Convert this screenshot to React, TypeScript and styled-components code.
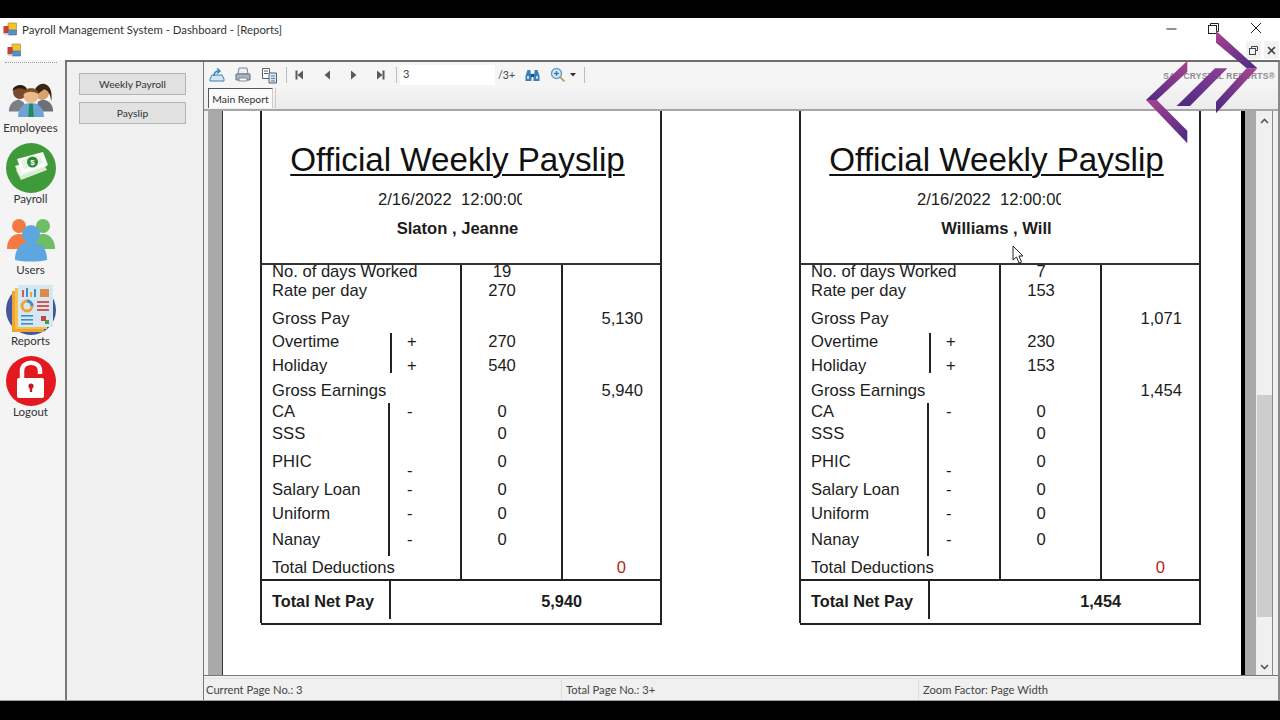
import React from "react"
import styled, { createGlobalStyle } from "styled-components"

const Global = createGlobalStyle`
  html, body {
    margin: 0;
    padding: 0;
    background: #000;
    overflow: hidden;
  }
  * {
    box-sizing: border-box;
  }
`

const Screen = styled.div`
  width: 1280px;
  height: 720px;
  padding: 18px 0 19px;
  background: #000;
  position: relative;
  overflow: hidden;
  font-family: "Lato", "Noto Sans", sans-serif;
  color: #222;
`
const Win = styled.div`
  height: 683px;
  background: #fff;
  display: flex;
  flex-direction: column;
`
const TitleBar = styled.div`
  height: 22px;
  display: flex;
  align-items: center;
  padding-left: 3px;
  font-size: 11.35px;
  color: #333;
  gap: 5px;
`
const WinControls = styled.div`
  margin-left: auto;
  display: flex;
  align-items: center;
  padding: 0 18px 2px 0;
  gap: 31px;
`
const MenuBar = styled.div`
  height: 20px;
  display: flex;
  align-items: center;
  padding-left: 7px;
`
const MdiControls = styled.div`
  margin-left: auto;
  display: flex;
  height: 18px;
  gap: 3px;
  padding-right: 1px;
`
const MdiButton = styled.div`
  width: 15px;
  height: 18px;
  background: #f2f2f2;
  display: flex;
  align-items: center;
  justify-content: center;
`
const Body = styled.div`
  flex: 1;
  display: flex;
  min-height: 0;
  background: #f0f0f0;
  border-top: 2px solid #6e6e6e;
  border-right: 2px solid #8a8a8a;
  border-bottom: 1px solid #a0a0a0;
`
const Sidebar = styled.div`
  width: 65px;
  margin-top: -2px;
  background: #f4f4f4;
  border-top: 2px solid #f4f4f4;
  display: flex;
  flex-direction: column;
  align-items: center;
  padding-right: 4px;
`
const Grip = styled.div`
  width: 52px;
  height: 1px;
  border-top: 1px dotted #9a9a9a;
  margin-bottom: 10px;
`
const NavItem = styled.div`
  width: 60px;
  height: 71px;
  display: flex;
  flex-direction: column;
  align-items: center;
  font-size: 11.5px;
  line-height: 14px;
  color: #333;
  white-space: nowrap;
`
const FirstNavItem = styled(NavItem)`
  height: 68px;
  margin-top: 2px;
`
const IconSlot = styled.div`
  height: 49px;
  flex: none;
  display: flex;
  align-items: center;
  justify-content: center;
`
const FirstIconSlot = styled(IconSlot)`
  height: 46px;
`
const SubNav = styled.div`
  width: 139px;
  border-left: 2px solid #777;
  border-right: 1px solid #777;
  padding: 11px 17px 0 12px;
  display: flex;
  flex-direction: column;
  gap: 7px;
  background: #f0f0f0;
`
const SubButton = styled.div`
  height: 22px;
  background: #e1e1e1;
  border: 1px solid #b4b4b4;
  padding-bottom: 1px;
  font-size: 10.3px;
  color: #333;
  display: flex;
  align-items: center;
  justify-content: center;
`
const Viewer = styled.div`
  flex: 1;
  min-width: 0;
  display: flex;
  flex-direction: column;
  background: #f0f0f0;
`
const Toolbar = styled.div`
  height: 26px;
  flex: none;
  display: flex;
  align-items: center;
  background: #f5f5f5;
  font-size: 10.6px;
  color: #444;
`
const ToolIcon = styled.div<{ $w: number }>`
  width: ${(p) => p.$w}px;
  flex: none;
  display: flex;
  align-items: center;
  justify-content: center;
`
const ToolSep = styled.div<{ $gap: number }>`
  width: 1px;
  height: 16px;
  margin-left: ${(p) => p.$gap}px;
  background: #bdbdbd;
  flex: none;
`
const PageInput = styled.div`
  width: 95px;
  height: 20px;
  margin-left: 3px;
  background: #fff;
  padding: 0 0 3px 3px;
  font-size: 11px;
  display: flex;
  align-items: center;
  flex: none;
`
const PageTotal = styled.span`
  width: 24px;
  padding-left: 3px;
  flex: none;
`
const Brand = styled.div`
  margin-left: auto;
  padding: 2px 3px 0 0;
  font-family: "Liberation Sans", sans-serif;
  font-size: 8.4px;
  font-weight: 700;
  color: #8c8c8c;
  letter-spacing: 0.25px;
  white-space: nowrap;
`
const TabRow = styled.div`
  height: 23px;
  flex: none;
  display: flex;
  align-items: flex-start;
  padding-left: 4px;
  background: linear-gradient(#f3f3f3, #ececec);
  border-bottom: 2px solid #a6a6a6;
`
const Tab = styled.div`
  width: 65px;
  height: 20px;
  background: #fafafa;
  border-top: 1px solid #555;
  border-left: 1px solid #555;
  border-right: 1px solid #ccc;
  font-size: 10.4px;
  color: #333;
  display: flex;
  align-items: center;
  justify-content: center;
`
const TabEdge = styled.div`
  width: 1px;
  height: 20px;
  margin-left: 2px;
  background: #c9c9c9;
`
const ReportFrame = styled.div`
  flex: 1;
  min-height: 0;
  display: flex;
  padding: 0 5px 0 4px;
  background: #f0f0f0;
  border-bottom: 1px solid #777;
  margin-bottom: 2px;
`
const Sheet = styled.div`
  flex: 1;
  min-width: 0;
  display: flex;
  background: #fff;
  overflow: hidden;
  position: relative;
`
const LeftStrip = styled.div`
  width: 15px;
  flex: none;
  background: #a9a9a9;
  border-right: 1px solid #333;
`
const SlipArea = styled.div`
  flex: 1;
  min-width: 0;
  display: flex;
  gap: 137px;
  padding-left: 37px;
  background: #fff;
`
const RightStrip = styled.div`
  width: 16px;
  flex: none;
  background: #a9a9a9;
  border-left: 4px solid #000;
  border-right: 1px solid #eee;
`
const Scrollbar = styled.div`
  width: 16px;
  flex: none;
  background: #f0f0f0;
  border-right: 1px solid #888;
  display: flex;
  flex-direction: column;
  align-items: center;
  position: relative;
`
const ScrollArrow = styled.div`
  height: 17px;
  width: 100%;
  flex: none;
  display: flex;
  align-items: center;
  justify-content: center;
`
const ScrollUp = styled(ScrollArrow)`
  padding-top: 3px;
`
const ScrollTrack = styled.div`
  flex: 1;
  width: 100%;
  padding-top: 267px;
  padding-bottom: 41px;
  display: flex;
`
const ScrollThumb = styled.div`
  flex: 1;
  background: #cdcdcd;
`
const StatusBar = styled.div`
  height: 22px;
  flex: none;
  display: grid;
  grid-template-columns: 357px 357px 1fr;
  align-items: center;
  font-size: 11.2px;
  color: #444;
  border-top: 1px solid #e2e2e2;
`
const StatusCell = styled.div<{ $pad: number }>`
  height: 100%;
  display: flex;
  align-items: center;
  padding-left: ${(p) => p.$pad}px;
  & + & {
    border-left: 1px solid #dcdcdc;
  }
`
const Slip = styled.div`
  width: 402px;
  flex: none;
  font-family: "Liberation Sans", Arial, sans-serif;
  color: #1c1c1c;
`
const SlipHead = styled.div`
  height: 154px;
  border-left: 2px solid #222;
  border-right: 2px solid #222;
  border-bottom: 2px solid #333;
  display: flex;
  flex-direction: column;
  align-items: center;
  padding-right: 7px;
`
const SlipTitle = styled.div`
  margin-top: 29px;
  font-size: 33.2px;
  line-height: 40px;
  text-decoration: underline;
  text-decoration-thickness: 2px;
  text-underline-offset: 3px;
  color: #111;
  white-space: nowrap;
`
const SlipDate = styled.div`
  margin-top: 10px;
  margin-right: 15px;
  width: 144px;
  overflow: hidden;
  white-space: nowrap;
  font-size: 16.6px;
  line-height: 20px;
`
const SlipName = styled.div`
  margin-top: 9px;
  font-size: 16.6px;
  line-height: 20px;
  font-weight: 700;
`
const Rows = styled.div`
  border-left: 2px solid #222;
  border-right: 2px solid #222;
  overflow: hidden;
`
const Row = styled.div<{ $h: number; $up?: number }>`
  height: ${(p) => p.$h}px;
  display: grid;
  grid-template-columns: 128px 70px 101px 1fr;
  font-size: 16.6px;
  line-height: 20px;
  & > div {
    margin-top: ${(p) => -(p.$up ?? 0)}px;
    padding-top: 1px;
  }
`
const Label = styled.div`
  padding-left: 10px;
  white-space: nowrap;
`
const Sign = styled.div<{ $top?: number; $bottom?: number; $rule?: boolean; $x?: number }>`
  position: relative;
  padding-left: 17px;
  &::before {
    content: "";
    display: ${(p) => (p.$rule ? "block" : "none")};
    position: absolute;
    left: ${(p) => p.$x ?? 0}px;
    top: ${(p) => p.$top ?? 0}px;
    bottom: ${(p) => p.$bottom ?? -4}px;
    width: 2px;
    background: #222;
  }
`
const PhicDash = styled.span`
  display: block;
  margin-top: 9px;
`
const Amount = styled.div`
  border-left: 2px solid #222;
  padding-right: 19px;
  text-align: center;
  height: calc(100% + 8px);
`
const Total = styled.div<{ $red?: boolean }>`
  border-left: 2px solid #222;
  text-align: right;
  padding-right: ${(p) => (p.$red ? 34 : 17)}px;
  color: ${(p) => (p.$red ? "#b3261e" : "inherit")};
  height: calc(100% + 8px);
`
const NetLine = styled.div`
  height: 2px;
  background: #222;
`
const NetPay = styled.div`
  height: 42px;
  display: grid;
  grid-template-columns: 129px 1fr;
  font-size: 16.3px;
  font-weight: 700;
  border-left: 2px solid #222;
  border-right: 2px solid #222;
`
const NetLabel = styled.div`
  height: 38px;
  padding: 10px 0 0 10px;
  border-right: 2px solid #222;
  line-height: 20px;
`
const NetValue = styled.div`
  padding: 10px 78px 0 0;
  text-align: right;
  line-height: 20px;
`
const NetBottom = styled.div`
  height: 2px;
  background: #222;
  margin-left: 1px;
`
const Overlay = styled.svg`
  position: absolute;
  pointer-events: none;
`
const CursorMark = styled(Overlay)`
  left: 1012px;
  top: 245px;
`
const LogoMark = styled(Overlay)`
  right: 0;
  top: 0;
`

function AppGlyph() {
  return (
    <svg width="14" height="14" viewBox="0 0 14 14">
      <rect x="5" y="1" width="8.5" height="7.5" fill="#f2c230" stroke="#a8852a" strokeWidth="0.6" />
      <rect x="0.5" y="4" width="5" height="7.5" fill="#c8402f" />
      <rect x="5" y="8" width="8.5" height="5" fill="#5b8ec8" stroke="#3b6aa0" strokeWidth="0.6" />
      <rect x="1.5" y="11" width="4" height="2" fill="#d0d0d0" />
    </svg>
  )
}

function EmployeesIcon() {
  return (
    <svg width="48" height="39" viewBox="0 0 52 42">
      <path d="M2 35c0-8 5-12 11-13l5 3 4 10z" fill="#7d7f86" />
      <path d="M30 35l4-11 5-2c6 1 11 5 11 13z" fill="#6d7078" />
      <circle cx="14" cy="14" r="7.5" fill="#7b4a2c" />
      <path d="M6 13c0-8 16-9 16 0-4-4-12-4-16 0z" fill="#2b1a12" />
      <circle cx="38" cy="15" r="7.5" fill="#d9a070" />
      <path d="M29 24c-2-14 5-19 10-19s11 5 9 19c-1-7-3-12-8-13-4 4-9 4-9 13z" fill="#3a2416" />
      <path d="M12 41c0-10 6-15 14-15s14 5 14 15z" fill="#6ea3d6" />
      <path d="M24 27h4l1 14h-6z" fill="#1f8a5e" />
      <circle cx="26" cy="18" r="8" fill="#eeba8a" />
      <path d="M18 16c0-8 16-8 16 0-5-3-11-3-16 0z" fill="#7a5128" />
    </svg>
  )
}

function PayrollIcon() {
  return (
    <svg width="50" height="50" viewBox="0 0 50 50">
      <circle cx="25" cy="25" r="25" fill="#3f9a3a" />
      <path d="M10 27l26-9 5 9-26 10z" fill="#d8ecd2" />
      <path d="M9 23l27-9 5 9-27 10z" fill="#eef7ea" />
      <path d="M11 16l26-7 5 13-26 8z" fill="#fff" />
      <path d="M14.5 17.5l20-5.5 3.5 8.5-20 6z" fill="#e6f3e2" />
      <circle cx="26.5" cy="19" r="5.5" fill="#2e8a34" />
      <text x="26.5" y="22" fontSize="8" fontWeight="700" textAnchor="middle" fill="#fff" fontFamily="Liberation Sans">$</text>
    </svg>
  )
}

function UsersIcon() {
  return (
    <svg width="48" height="48" viewBox="0 0 48 48">
      <circle cx="12" cy="11" r="7" fill="#f47a44" />
      <path d="M0 34c0-9 5-15 12-15s9 4 9 15z" fill="#f47a44" />
      <circle cx="36" cy="11" r="7" fill="#6cbf65" />
      <path d="M48 34c0-9-5-15-12-15s-9 4-9 15z" fill="#6cbf65" />
      <circle cx="24" cy="19" r="9" fill="#5ea6e0" />
      <path d="M8 45c0-12 6-18 16-18s16 6 16 18c-10 2-22 2-32 0z" fill="#5ea6e0" />
    </svg>
  )
}

function ReportsIcon() {
  return (
    <svg width="50" height="50" viewBox="0 0 50 50">
      <circle cx="25" cy="25" r="25" fill="#43569a" />
      <rect x="6" y="6" width="32" height="41" fill="#eda52f" />
      <rect x="9" y="3" width="32" height="41" fill="#f6c04c" />
      <rect x="12" y="0" width="35" height="42" fill="#d3e8f2" />
      <rect x="16" y="5" width="2" height="7" fill="#e2574c" />
      <rect x="20" y="3" width="2" height="9" fill="#3f8fcf" />
      <rect x="24" y="7" width="2" height="5" fill="#eda52f" />
      <rect x="28" y="4" width="2" height="8" fill="#3f8fcf" />
      <rect x="34" y="4" width="9" height="8" fill="#d98b4a" />
      <circle cx="21" cy="21" r="5" fill="none" stroke="#eda52f" strokeWidth="3" />
      <path d="M21 16a5 5 0 0 1 5 5" fill="none" stroke="#3f8fcf" strokeWidth="3" />
      <rect x="31" y="16" width="12" height="2" fill="#d9534f" />
      <rect x="31" y="20" width="12" height="2" fill="#d9534f" />
      <rect x="31" y="24" width="12" height="2" fill="#d9534f" />
      <rect x="15" y="30" width="12" height="1.6" fill="#3f8fcf" />
      <rect x="15" y="34" width="12" height="1.6" fill="#3f8fcf" />
      <rect x="15" y="38" width="12" height="1.6" fill="#3f8fcf" />
      <rect x="35" y="31" width="5" height="5" fill="#c9433b" />
      <rect x="39" y="35" width="4" height="4" fill="#4a9a49" />
    </svg>
  )
}

function LogoutIcon() {
  return (
    <svg width="50" height="50" viewBox="0 0 50 50">
      <circle cx="25" cy="25" r="25" fill="#e4181f" />
      <path d="M16 22v-7c0-11 18-11 18 0v3" fill="none" stroke="#fff" strokeWidth="4.5" />
      <rect x="11" y="22" width="27" height="20" rx="2" fill="#fff" />
      <circle cx="25" cy="30" r="2.6" fill="#c41a1f" />
      <rect x="23.8" y="30" width="2.4" height="6" fill="#c41a1f" />
    </svg>
  )
}

function ExportIcon() {
  return (
    <svg width="16" height="16" viewBox="0 0 16 16" fill="none">
      <path d="M1 12l2-4h10l2 4v2H1z" fill="#d3e6f5" stroke="#3f7fb0" />
      <path d="M5 9c0-3 2-5 5-5M8 1.5L11 4 8 6.5" stroke="#3a86bd" strokeWidth="1.5" />
    </svg>
  )
}

function PrintIcon() {
  return (
    <svg width="16" height="16" viewBox="0 0 16 16">
      <path d="M4 1h8l1 6H3z" fill="#eef1f5" stroke="#7d8894" />
      <path d="M1 7h14v6H1z" fill="#a9b5c2" stroke="#64707c" />
      <path d="M4 11h8v3H4z" fill="#fff" stroke="#7d8894" />
    </svg>
  )
}

function CopyIcon() {
  return (
    <svg width="17" height="17" viewBox="0 0 17 17">
      <path d="M1.5 1.5h7v10h-7z" fill="#fff" stroke="#56616c" />
      <path d="M3 4h4M3 6.5h4" stroke="#56616c" />
      <path d="M8 6h7.5v10H8z" fill="#dfe8f1" stroke="#56616c" />
      <path d="M10 9h4M10 11.500h4M10 14h4" stroke="#4a7da8" />
    </svg>
  )
}

function PageArrow({ kind }: { kind: "first" | "prev" | "next" | "last" }) {
  const left = kind === "first" || kind === "prev"
  const bar = kind === "first" || kind === "last"
  return (
    <svg width="9" height="10" viewBox="0 0 9 10" fill="#5a5a5a">
      {left ? <path d="M8 0.500v9L2.500 5z" /> : <path d="M1 0.500v9L6.500 5z" />}
      {bar && <rect x={left ? 0.5 : 6.5} y="0.500" width="2" height="9" />}
    </svg>
  )
}

function BinocularsIcon() {
  return (
    <svg width="15" height="13" viewBox="0 0 15 13">
      <path d="M2.500 1h3v3l1 1v7H.5V7z" fill="#3b7fb8" />
      <path d="M12.500 1h-3v3l-1 1v7h6V7z" fill="#3b7fb8" />
      <rect x="6" y="5" width="3" height="3" fill="#1d4f7c" />
      <rect x="2" y="7" width="2" height="3" fill="#b5d7ef" />
      <rect x="11" y="7" width="2" height="3" fill="#b5d7ef" />
    </svg>
  )
}

function ZoomIcon() {
  return (
    <svg width="16" height="16" viewBox="0 0 16 16" fill="none">
      <path d="M9.500 9.500l5 5" stroke="#c9a46a" strokeWidth="2" />
      <circle cx="6.500" cy="6.500" r="5" fill="#d7e9f6" stroke="#6b9cc4" strokeWidth="1.400" />
      <path d="M4 6.500h5M6.500 4v5" stroke="#3a7cb0" strokeWidth="1.300" />
    </svg>
  )
}

function Caret() {
  return (
    <svg width="6" height="4" viewBox="0 0 6 4">
      <path d="M0 0h6L3 3.500z" fill="#333" />
    </svg>
  )
}

function Logo() {
  return (
    <LogoMark width="180" height="150" viewBox="0 0 540 450">
      <defs>
        <linearGradient id="armDown" x1="0" y1="0" x2="1" y2="1">
          <stop offset="0" stopColor="#a9448f" />
          <stop offset="1" stopColor="#4a2a83" />
        </linearGradient>
        <linearGradient id="armUp" x1="1" y1="0" x2="0" y2="1">
          <stop offset="0" stopColor="#a9448f" />
          <stop offset="1" stopColor="#4a2a83" />
        </linearGradient>
        <linearGradient id="slash" x1="1" y1="0" x2="0" y2="1">
          <stop offset="0" stopColor="#8f3f95" />
          <stop offset="1" stopColor="#4a2a83" />
        </linearGradient>
      </defs>
      <polygon points="348,92 472,205 440,205 348,128" fill="url(#armDown)" />
      <polygon points="472,205 348,340 348,305 440,205" fill="url(#armUp)" />
      <polygon points="262,182 262,215 170,300 138,300" fill="url(#armUp)" />
      <polygon points="138,300 170,300 262,392 262,430" fill="url(#armDown)" />
      <polygon points="345,205 382,205 270,318 230,318" fill="url(#slash)" />
    </LogoMark>
  )
}

type Line = { label: string; sign?: string; amount?: string; total?: string; h: number; red?: boolean; up?: number; rule?: number }

function lines(d: { days: string; rate: string; gross: string; ot: string; hol: string; earn: string }): Line[] {
  return [
    { label: "No. of days Worked", amount: d.days, h: 15, up: 4 },
    { label: "Rate per day", amount: d.rate, h: 28 },
    { label: "Gross Pay", total: d.gross, h: 23 },
    { label: "Overtime", sign: "+", amount: d.ot, h: 24, rule: 1 },
    { label: "Holiday", sign: "+", amount: d.hol, h: 25, rule: 2 },
    { label: "Gross Earnings", total: d.earn, h: 21 },
    { label: "CA", sign: "-", amount: "0", h: 22, rule: 3 },
    { label: "SSS", amount: "0", h: 28, rule: 4 },
    { label: "PHIC", amount: "0", h: 28, rule: 5 },
    { label: "Salary Loan", sign: "-", amount: "0", h: 24, rule: 4 },
    { label: "Uniform", sign: "-", amount: "0", h: 26, rule: 4 },
    { label: "Nanay", sign: "-", amount: "0", h: 28, rule: 6 },
    { label: "Total Deductions", total: "0", h: 22, red: true },
  ]
}

function ruleProps(rule?: number) {
  switch (rule) {
    case 1:
      return { $rule: true, $x: 0, $top: 2, $bottom: 0 }
    case 2:
      return { $rule: true, $x: 0, $top: 0, $bottom: 7 }
    case 3:
      return { $rule: true, $x: -2, $top: 2, $bottom: 0 }
    case 4:
    case 5:
      return { $rule: true, $x: -2, $top: 0, $bottom: 0 }
    case 6:
      return { $rule: true, $x: -2, $top: 0, $bottom: 1 }
    default:
      return {}
  }
}

function Payslip(props: { name: string; net: string; days: string; rate: string; gross: string; ot: string; hol: string; earn: string }) {
  return (
    <Slip>
      <SlipHead>
        <SlipTitle>Official Weekly Payslip</SlipTitle>
        <SlipDate>2/16/2022&nbsp; 12:00:00 AM</SlipDate>
        <SlipName>{props.name}</SlipName>
      </SlipHead>
      <Rows>
        {lines(props).map((l) => (
          <Row key={l.label} $h={l.h} $up={l.up}>
            <Label>{l.label}</Label>
            <Sign {...ruleProps(l.rule)}>
              {l.label === "PHIC" ? <PhicDash>-</PhicDash> : l.sign}
            </Sign>
            <Amount>{l.amount}</Amount>
            <Total $red={l.red}>{l.total}</Total>
          </Row>
        ))}
      </Rows>
      <NetLine />
      <NetPay>
        <NetLabel>Total Net Pay</NetLabel>
        <NetValue>{props.net}</NetValue>
      </NetPay>
      <NetBottom />
    </Slip>
  )
}

export default function App() {
  return (
    <Screen>
      <Global />
      <Win>
        <TitleBar>
          <AppGlyph />
          <span>Payroll Management System - Dashboard - [Reports]</span>
          <WinControls>
            <svg width="11" height="11" viewBox="0 0 11 11">
              <path d="M0.500 6h10" stroke="#222" />
            </svg>
            <svg width="11" height="11" viewBox="0 0 11 11" fill="none" stroke="#222">
              <path d="M2.500 2.500v-2h8v8h-2" />
              <rect x="0.500" y="2.500" width="8" height="8" />
            </svg>
            <svg width="12" height="12" viewBox="0 0 12 12" stroke="#222">
              <path d="M1 1l10 10M11 1L1 11" />
            </svg>
          </WinControls>
        </TitleBar>
        <MenuBar>
          <AppGlyph />
          <MdiControls>
            <MdiButton>
              <svg width="9" height="9" viewBox="0 0 9 9" fill="none" stroke="#444">
                <path d="M2.500 2.500v-2h6v4h-2" />
                <rect x="0.500" y="2.500" width="6" height="6" />
              </svg>
            </MdiButton>
            <MdiButton>
              <svg width="9" height="9" viewBox="0 0 9 9" stroke="#444" strokeWidth="1.600">
                <path d="M1 1l7 7M8 1L1 8" />
              </svg>
            </MdiButton>
          </MdiControls>
        </MenuBar>
        <Body>
          <Sidebar>
            <Grip />
            <FirstNavItem>
              <FirstIconSlot>
                <EmployeesIcon />
              </FirstIconSlot>
              Employees
            </FirstNavItem>
            <NavItem>
              <IconSlot>
                <PayrollIcon />
              </IconSlot>
              Payroll
            </NavItem>
            <NavItem>
              <IconSlot>
                <UsersIcon />
              </IconSlot>
              Users
            </NavItem>
            <NavItem>
              <IconSlot>
                <ReportsIcon />
              </IconSlot>
              Reports
            </NavItem>
            <NavItem>
              <IconSlot>
                <LogoutIcon />
              </IconSlot>
              Logout
            </NavItem>
          </Sidebar>
          <SubNav>
            <SubButton>Weekly Payroll</SubButton>
            <SubButton>Payslip</SubButton>
          </SubNav>
          <Viewer>
            <Toolbar>
              <ToolIcon $w={26}>
                <ExportIcon />
              </ToolIcon>
              <ToolIcon $w={26}>
                <PrintIcon />
              </ToolIcon>
              <ToolIcon $w={26}>
                <CopyIcon />
              </ToolIcon>
              <ToolSep $gap={4} />
              <ToolIcon $w={25}>
                <PageArrow kind="first" />
              </ToolIcon>
              <ToolIcon $w={29}>
                <PageArrow kind="prev" />
              </ToolIcon>
              <ToolIcon $w={27}>
                <PageArrow kind="next" />
              </ToolIcon>
              <ToolIcon $w={25}>
                <PageArrow kind="last" />
              </ToolIcon>
              <ToolSep $gap={3} />
              <PageInput>3</PageInput>
              <PageTotal>/3+</PageTotal>
              <ToolIcon $w={27}>
                <BinocularsIcon />
              </ToolIcon>
              <ToolIcon $w={24}>
                <ZoomIcon />
              </ToolIcon>
              <ToolIcon $w={6}>
                <Caret />
              </ToolIcon>
              <ToolSep $gap={8} />
              <Brand>SAP CRYSTAL REPORTS®</Brand>
            </Toolbar>
            <TabRow>
              <Tab>Main Report</Tab>
              <TabEdge />
            </TabRow>
            <ReportFrame>
              <Sheet>
                <LeftStrip />
                <SlipArea>
                  <Payslip name="Slaton , Jeanne" days="19" rate="270" gross="5,130" ot="270" hol="540" earn="5,940" net="5,940" />
                  <Payslip name="Williams , Will" days="7" rate="153" gross="1,071" ot="230" hol="153" earn="1,454" net="1,454" />
                </SlipArea>
                <RightStrip />
              </Sheet>
              <Scrollbar>
                <ScrollUp>
                  <svg width="9" height="6" viewBox="0 0 9 6" fill="none" stroke="#555" strokeWidth="1.600">
                    <path d="M1 5l3.500-3.500L8 5" />
                  </svg>
                </ScrollUp>
                <ScrollTrack>
                  <ScrollThumb />
                </ScrollTrack>
                <ScrollArrow>
                  <svg width="9" height="6" viewBox="0 0 9 6" fill="none" stroke="#555" strokeWidth="1.600">
                    <path d="M1 1l3.500 3.500L8 1" />
                  </svg>
                </ScrollArrow>
              </Scrollbar>
            </ReportFrame>
            <StatusBar>
              <StatusCell $pad={2}>Current Page No.: 3</StatusCell>
              <StatusCell $pad={4}>Total Page No.: 3+</StatusCell>
              <StatusCell $pad={4}>Zoom Factor: Page Width</StatusCell>
            </StatusBar>
          </Viewer>
        </Body>
      </Win>
      <CursorMark width="13" height="19" viewBox="0 0 13 19">
        <path d="M1 1v14l3.500-3 2.500 6 2.500-1-2.500-6H11z" fill="#fff" stroke="#222" />
      </CursorMark>
      <Logo />
    </Screen>
  )
}
